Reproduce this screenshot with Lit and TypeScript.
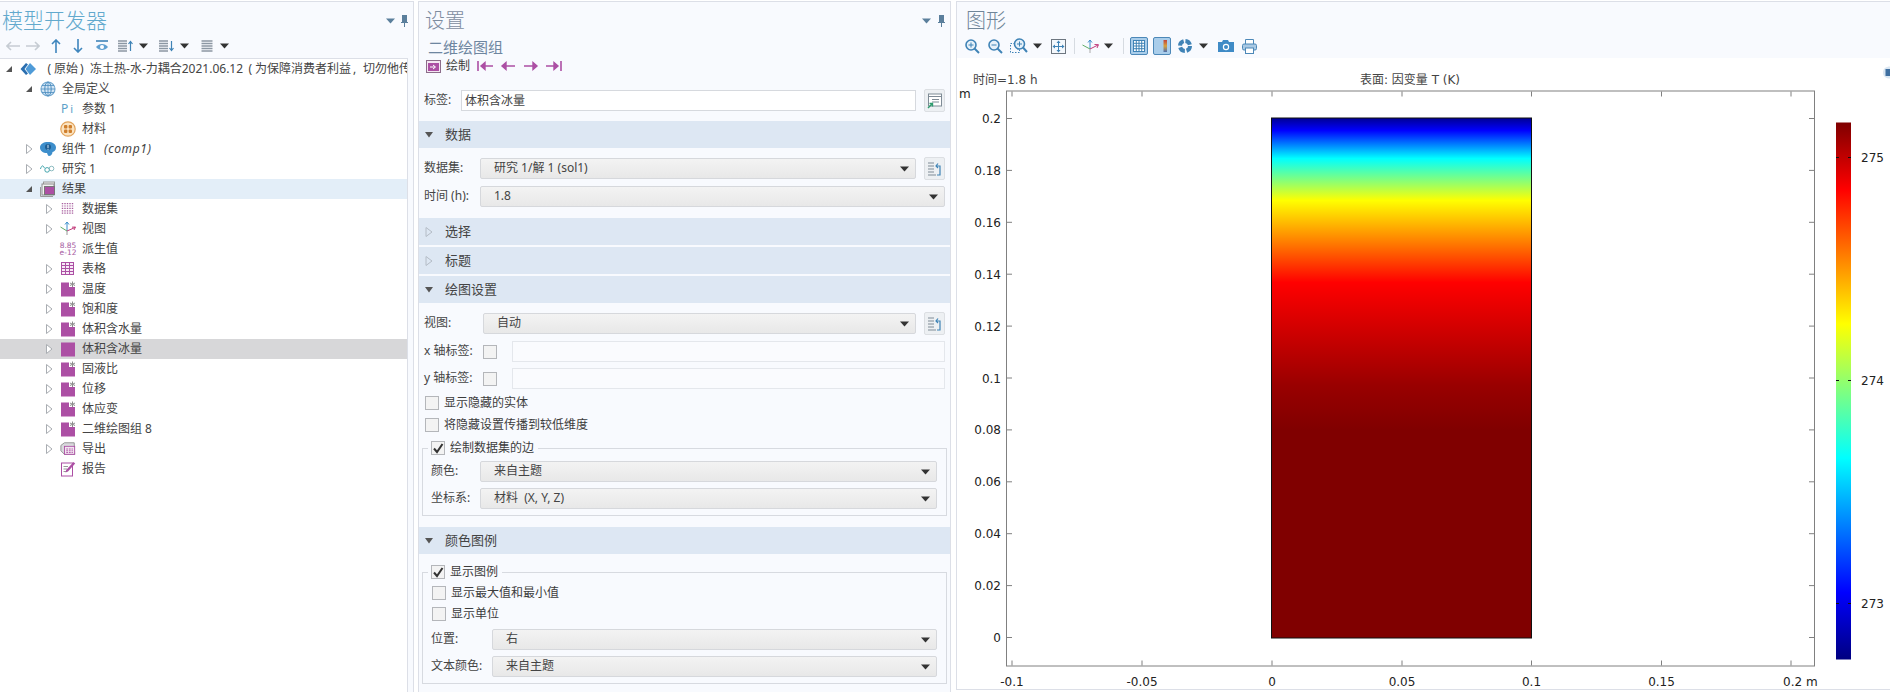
import { LitElement, html, css, svg } from "lit";
import { customElement } from "lit/decorators.js";

const ic = (w: number, h: number, c: unknown) =>
  html`<svg class="ic" width=${w} height=${h} viewBox="0 0 ${w} ${h}">${c}</svg>`;

const PURPLE = "#ac4fa4";
const plotIcon = (star: boolean) =>
  ic(16, 16, star
    ? svg`<path d="M1 1.5H9V6H15V15.5H1Z" fill=${PURPLE}/><path d="M12.5 .5V6M10 2L15 4.5M15 2L10 4.5" stroke="#8c8c8c" stroke-width="1"/>`
    : svg`<rect x="1" y="1.5" width="14" height="14" fill=${PURPLE}/>`);

const icons: Record<string, unknown> = {
  root: ic(16, 16, svg`<path d="M6 2L0.5 8L6 14L8 12.4L4.5 8L8 3.6Z" fill="#2b6fb0"/><path d="M10 2L16 8L10 14L5.5 8Z" fill="#4f9bd8"/>`),
  globe: ic(16, 16, svg`<circle cx="8" cy="8" r="7" fill="#d4e6f5" stroke="#74a9d0" stroke-width="1.2"/><ellipse cx="8" cy="8" rx="3.2" ry="7" fill="none" stroke="#4b8dbf"/><path d="M8 1V15M1 8H15M2 4.5H14M2 11.5H14" stroke="#4b8dbf" stroke-width=".8"/>`),
  mat: ic(16, 16, svg`<circle cx="8" cy="8" r="7.2" fill="#fbe3c0" stroke="#e2a35b" stroke-width="1.2"/><g fill="#cf7f2c"><rect x="4" y="4" width="3.4" height="3.4" rx="1"/><rect x="8.6" y="4" width="3.4" height="3.4" rx="1"/><rect x="4" y="8.6" width="3.4" height="3.4" rx="1"/><rect x="8.6" y="8.6" width="3.4" height="3.4" rx="1"/></g>`),
  comp: ic(16, 16, svg`<path d="M0 6.5C0 3 3.5 1 8 1C12.5 1 16 3 16 6.5C16 9 14.5 10.5 12.5 11C12.5 13 11 15 9 15C8 15 7.5 13 7 12C3 12 0 10 0 6.5Z" fill="#3d8ecb"/><circle cx="8" cy="6" r="3" fill="#1f5d92"/><path d="M8 3.8V7.2M8 8V8.8" stroke="#cfe6f7"/>`),
  study: ic(18, 16, svg`<path d="M.5 8C2 3.5 3.5 3.5 5 7" fill="none" stroke="#2c9aa3"/><circle cx="8" cy="9" r="2.6" fill="none" stroke="#2c9aa3"/><circle cx="13" cy="7.5" r="2.6" fill="none" stroke="#7db2b8"/>`),
  res: ic(16, 16, svg`<rect x="3.5" y="1" width="11" height="11" fill="#eee" stroke="#999"/><rect x="2" y="3" width="12" height="11" fill="#f2f2f2" stroke="#8c8c8c"/><rect x="4.5" y="5.5" width="10" height="8" fill=${PURPLE} stroke="#777"/><path d="M0.5 6V15.5H13" fill="none" stroke="#999"/>`),
  data: ic(16, 16, svg`<path d="M2.5 2V14M5 2V14M7.5 2V14M10 2V14M12.5 2V14" stroke="#a85f9f" stroke-width="1.4" stroke-dasharray="1.2 1.2"/>`),
  view: ic(16, 16, svg`<path d="M7 1.5V10" stroke="#3a8ecb"/><path d="M7 10L.5 6" stroke="#62ad68"/><path d="M7 10L15 6.5" stroke="#c23a7a"/><path d="M5 3.5L7 1L9 3.5" fill="none" stroke="#3a8ecb"/><path d="M12 6.2L15.5 6L14 9" fill="none" stroke="#c23a7a"/><path d="M7 10V14" stroke="#999"/>`),
  table: ic(16, 16, svg`<rect x="1.5" y="1.5" width="12" height="12" fill="#f7eaf6" stroke=${PURPLE}/><path d="M1.5 4.5H13.5M1.5 7.5H13.5M1.5 10.5H13.5M5.5 1.5V13.5M9.5 1.5V13.5" stroke=${PURPLE}/>`),
  plot: plotIcon(true),
  plotSel: plotIcon(false),
  exp: ic(18, 16, svg`<path d="M1 4L5 1H16L16.5 14H5L1 10Z" fill="#d9d9dd" stroke="#8c8c8c"/><rect x="5" y="5" width="11.5" height="9" fill="#f2e5f0" stroke=${PURPLE}/><path d="M7 8H14.5M7 10H14.5M7 12H14.5" stroke=${PURPLE} stroke-dasharray="2 1"/>`),
  rep: ic(16, 16, svg`<rect x="1.5" y="2" width="11" height="13" fill="#fff" stroke=${PURPLE}/><path d="M3.5 5.5H8M3.5 8H7M3.5 10.5H6" stroke="#999"/><path d="M13.5 1L15.2 2.6L8 10.5L5.5 11.5L6.2 9Z" fill=${PURPLE}/>`),
};

const ar = (d: string, c: string) => ic(14, 14, svg`<path d=${d} fill="none" stroke=${c} stroke-width="1.6"/>`);
const caret = ic(9, 6, svg`<path d="M0 .5H9L4.5 5.5Z" fill="#333"/>`);
const listIc = (tail: unknown) =>
  ic(17, 14, svg`<path d="M1 2H10M1 4.5H10M1 7H10M1 9.5H10M1 12H10" stroke="#8c97a3" stroke-width="1.3"/>${tail}`);

const B = "#3f83b6";
const tool1: [number, number, unknown][] = [
  [6, 14, ar("M14 7H1M5 3L1 7L5 11", "#c6ccd3")],
  [26, 14, ar("M0 7H13M9 3L13 7L9 11", "#c6ccd3")],
  [49, 14, ar("M7 14V1M3 5L7 1L11 5", "#3f86bd")],
  [71, 14, ar("M7 0V13M3 9L7 13L11 9", "#3f86bd")],
  [95, 14, ic(14, 14, svg`<path d="M1 2H13" stroke=${B} stroke-width="1.6"/><path d="M1 8C4 4 10 4 13 8C10 12 4 12 1 8Z" fill="#5f9fd0"/><circle cx="7" cy="8" r="2" fill="#fff"/>`)],
  [117, 17, listIc(svg`<path d="M13.5 12V3M11.5 5L13.5 2.5L15.5 5" fill="none" stroke=${B} stroke-width="1.2"/>`)],
  [139, 9, caret],
  [158, 17, listIc(svg`<path d="M13.5 2V11M11.5 9L13.5 11.5L15.5 9" fill="none" stroke=${B} stroke-width="1.2"/>`)],
  [180, 9, caret],
  [201, 12, ic(12, 14, svg`<path d="M.5 2H11.5M.5 4.5H11.5M.5 7H11.5M.5 9.5H11.5M.5 12H11.5" stroke="#8c97a3" stroke-width="1.3"/>`)],
  [220, 9, caret],
];
const lens = (inner: unknown) => ic(15, 15, svg`<circle cx="6" cy="6" r="5" fill="#e6f1f9" stroke=${B} stroke-width="1.6"/><path d="M9.5 9.5L14 14" stroke=${B} stroke-width="2"/>${inner}`);
const tool3: [number, number, unknown][] = [
  [965, 15, lens(svg`<path d="M3.5 6H8.5M6 3.5V8.5" stroke=${B}/>`)],
  [988, 15, lens(svg`<path d="M3.5 6H8.5" stroke=${B}/>`)],
  [1010, 18, ic(18, 16, svg`<rect x=".5" y="5.5" width="9" height="9" fill="none" stroke=${B} stroke-dasharray="1.5 1.5"/><circle cx="9.5" cy="6" r="5" fill="#e6f1f9" stroke=${B} stroke-width="1.6"/><path d="M13 9.5L17 14" stroke=${B} stroke-width="2"/><path d="M7 6H12M9.5 3.5V8.5" stroke=${B}/>`)],
  [1033, 9, caret],
  [1051, 15, ic(15, 15, svg`<rect x=".5" y=".5" width="14" height="14" fill="#f4f8fc" stroke="#6d7680"/><path d="M7.5 3.5V11.5M3.5 7.5H11.5" stroke="#3f83b6"/><path d="M5.5 4L7.5 1.5L9.5 4ZM5.5 11L7.5 13.5L9.5 11ZM4 5.5L1.5 7.5L4 9.5ZM11 5.5L13.5 7.5L11 9.5Z" fill="#3f83b6"/>`)],
  [1074, 1, ic(1, 16, svg`<rect width="1" height="16" fill="#d6dbe1"/>`)],
  [1082, 17, ic(17, 15, svg`<path d="M8 1V10" stroke="#3a8ecb"/><path d="M6 3.5L8 1L10 3.5" fill="none" stroke="#3a8ecb"/><path d="M8 10L.5 6" stroke="#62ad68"/><path d="M8 10L16 6" stroke="#c23a7a"/><path d="M12.5 5.5L16.5 5.7L15 9" fill="none" stroke="#c23a7a"/><path d="M8 10V14" stroke="#aaa"/>`)],
  [1104, 9, caret],
  [1123, 1, ic(1, 16, svg`<rect width="1" height="16" fill="#d6dbe1"/>`)],
  [1130, 18, ic(18, 18, svg`<rect x=".5" y=".5" width="17" height="17" rx="1.5" fill="#a9cdea" stroke="#4c88b8"/><rect x="3.5" y="3.5" width="11" height="11" fill="#fff" stroke="#3f83b6"/><path d="M3.5 6.3H14.5M3.5 9H14.5M3.5 11.7H14.5M6.3 3.5V14.5M9 3.5V14.5M11.7 3.5V14.5" stroke="#3f83b6"/>`)],
  [1153, 18, ic(18, 18, svg`<defs><linearGradient id="lg" x1="0" y1="0" x2="0" y2="1"><stop offset="0" stop-color="#c0453a"/><stop offset=".5" stop-color="#d9a23a"/><stop offset="1" stop-color="#4a6fb0"/></linearGradient></defs><rect x=".5" y=".5" width="17" height="17" rx="1.5" fill="#a9cdea" stroke="#4c88b8"/><rect x="10.5" y="3" width="3.5" height="12" fill="url(#lg)"/>`)],
  [1178, 14, ic(14, 14, svg`<circle cx="7" cy="7" r="5" fill="none" stroke="#3f83b6" stroke-width="4" stroke-dasharray="6 1.8"/>`)],
  [1199, 9, caret],
  [1218, 16, ic(16, 14, svg`<path d="M0 3H4L5 1H10L11 3H16V13H0Z" fill="#3f8bc6"/><circle cx="8" cy="8" r="3.2" fill="#fff"/><circle cx="8" cy="8" r="2" fill="#3f8bc6"/>`)],
  [1242, 15, ic(15, 15, svg`<path d="M3.5 5V.5H11.5V5" fill="#fff" stroke="#4c88b8"/><rect x=".5" y="5" width="14" height="6" rx="1.5" fill="#a9c9e4" stroke="#4c88b8"/><rect x="3.5" y="9" width="8" height="5.5" fill="#fff" stroke="#4c88b8"/>`)],
];
const tool2: [number, number, unknown][] = [
  [477, 16, ic(16, 12, svg`<path d="M1 1V11" stroke=${PURPLE} stroke-width="1.6"/><path d="M16 6H4M8 2.5L4 6L8 9.5Z" fill=${PURPLE} stroke=${PURPLE} stroke-width="1.4"/>`)],
  [500, 15, ic(15, 12, svg`<path d="M15 6H2M6 2.5L2 6L6 9.5Z" fill=${PURPLE} stroke=${PURPLE} stroke-width="1.4"/>`)],
  [524, 15, ic(15, 12, svg`<path d="M0 6H13M9 2.5L13 6L9 9.5Z" fill=${PURPLE} stroke=${PURPLE} stroke-width="1.4"/>`)],
  [546, 16, ic(16, 12, svg`<path d="M15 1V11" stroke=${PURPLE} stroke-width="1.6"/><path d="M0 6H12M8 2.5L12 6L8 9.5Z" fill=${PURPLE} stroke=${PURPLE} stroke-width="1.4"/>`)],
];
const tools = (items: [number, number, unknown][], origin: number) => {
  let cur = origin;
  return items.map(([x, w, c]) => {
    const m = x - cur;
    cur = x + w;
    return html`<span class="tool" style="margin-left:${m}px;width:${w}px">${c}</span>`;
  });
};

type Row = { l: number; a?: "o" | "c"; i?: string; t: unknown; cls?: string };
const plots = ["温度", "饱和度", "体积含水量"];
const rows: Row[] = [
  { l: 0, a: "o", i: "root", t: html`<span class="po">(</span>原始<span class="pc">)</span>冻土热-水-力耦合2021.06.12<span class="po">(</span>为保障消费者利益<span class="pc">,</span>切勿他传<span class="pc">)</span>` },
  { l: 1, a: "o", i: "globe", t: "全局定义" },
  { l: 2, i: "pi", t: "参数 1" },
  { l: 2, i: "mat", t: "材料" },
  { l: 1, a: "c", i: "comp", t: html`组件 1 <em class="tag">(comp1)</em>` },
  { l: 1, a: "c", i: "study", t: "研究 1" },
  { l: 1, a: "o", i: "res", t: "结果", cls: "active" },
  { l: 2, a: "c", i: "data", t: "数据集" },
  { l: 2, a: "c", i: "view", t: "视图" },
  { l: 2, i: "derived", t: "派生值" },
  { l: 2, a: "c", i: "table", t: "表格" },
  ...plots.map((t) => ({ l: 2, a: "c" as const, i: "plot", t })),
  { l: 2, a: "c", i: "plotSel", t: "体积含冰量", cls: "sel" },
  ...["固液比", "位移", "体应变", "二维绘图组 8"].map((t) => ({ l: 2, a: "c" as const, i: "plot", t })),
  { l: 2, a: "c", i: "exp", t: "导出" },
  { l: 2, i: "rep", t: "报告" },
];

const triOpen = ic(12, 12, svg`<path d="M9 3V9H3Z" fill="#555"/>`);
const triClosed = ic(12, 12, svg`<path d="M3.5 1.5L9 6L3.5 10.5Z" fill="#fff" stroke="#a9adb2"/>`);
const headOpen = ic(10, 8, svg`<path d="M1 1H9L5 6.5Z" fill="#555"/>`);
const headClosed = ic(10, 12, svg`<path d="M2 1.5L8 6L2 10.5Z" fill="none" stroke="#b4bcc6"/>`);
const copyIc = ic(15, 16, svg`<path d="M1 2H7M1 5H7M1 8H7M1 11H7M1 14H9" stroke="#7f8b96"/><path d="M9 5H13V14H10M11 2.5L9 5L11 7" fill="none" stroke="#3f83b6" stroke-width="1.2"/>`);
const tagIc = ic(15, 16, svg`<rect x="1.5" y="1" width="13" height="12" fill="#fff" stroke="#7f8b96"/><path d="M1.5 3.5H14.5M5 6.5H12M5 9H12" stroke="#7f8b96"/><path d="M1 15L5 11M2.5 10.5H5.5V13.5" fill="none" stroke="#2f9c6e" stroke-width="1.4"/>`);

const xTicks: [number, string][] = [[1012, "-0.1"], [1142, "-0.05"], [1272, "0"], [1402, "0.05"], [1531.5, "0.1"], [1661.5, "0.15"], [1791, "0.2"]];
const yVals = ["0.2", "0.18", "0.16", "0.14", "0.12", "0.1", "0.08", "0.06", "0.04", "0.02", "0"];
const Y0 = 118, YS = 51.9;

const rectStops: [number, string][] = [[117, "#000090"], [130, "#0000ff"], [158, "#00ffff"], [200, "#ffff00"], [282, "#ff0000"], [385, "#990000"], [430, "#800000"], [637, "#800000"]];

@customElement("app-root")
export class AppRoot extends LitElement {
  static styles = css`
    :host {
      display: flex;
      width: 1890px;
      height: 692px;
      overflow: hidden;
      background: #fff;
      font: 12px/1.2 "Noto Sans", "Noto Sans CJK SC", sans-serif;
      color: #3c3c3c;
    }
    svg { display: block; }
    .panel {
      box-sizing: border-box;
      height: 692px;
      margin-top: 1px;
      border: 1px solid #dcdfe7;
      border-bottom: 0;
      background: #f8fafe;
      display: flex;
      flex-direction: column;
      flex: none;
    }
    .p1 { width: 414px; border-left: 0; }
    .p2 { width: 533px; margin-left: 4px; }
    .p3 { width: 934px; margin-left: 5px; border-right: 0; height: 689px; border-bottom: 1px solid #dcdfe7; }
    .title {
      box-sizing: border-box;
      height: 30px;
      padding-top: 2px;
      margin-top: 3px;
      display: flex;
      align-items: center;
      font-size: 21px;
      font-weight: 300;
      color: #6f8598;
      flex: none;
    }
    .p1 .title { color: #62a9cd; padding-left: 2px; }
    .p2 .title { padding-left: 6px; font-size: 20px; color: #7d8c9e; }
    .p3 .title { padding-left: 9px; font-size: 20px; }
    .pins { margin-left: auto; display: flex; align-items: center; gap: 6px; padding-right: 5px; }
    .p2 .pins { padding-right: 5px; gap: 7px; }
    .bar { display: flex; align-items: center; height: 22px; flex: none; }
    .tool { display: flex; align-items: center; justify-content: center; flex: none; }
    .tree {
      flex: 1;
      margin-top: 1px;
      width: 407px;
      background: #fff;
      border-top: 1px solid #dcdfe7;
      border-right: 1px solid #dcdfe7;
      overflow: hidden;
    }
    .row { display: flex; align-items: center; height: 20px; white-space: nowrap; color: #444; }
    .row.active { background: #e3eef8; }
    .row.sel { background: #d7d7d9; }
    .arrow { width: 12px; margin-left: 3px; flex: none; }
    .node { width: 16px; margin-left: 5px; margin-right: 6px; flex: none; display: flex; justify-content: center; }
    .po, .pc { display: inline-block; width: 12px; }
    .po { text-align: right; padding-right: 3px; box-sizing: border-box; }
    .pc { text-align: left; padding-left: 2px; box-sizing: border-box; }
    .pi { color: #5d9fc9; font-size: 12px; letter-spacing: 2px; }
    .pi small { font-size: 11px; }
    .derived { color: #a65a9f; font: 7.5px/7.5px "DejaVu Sans", sans-serif; text-align: center; }
    .tag { font-size: 12px; margin-left: 5px; letter-spacing: .6px; }
    .sub { height: 20px; margin-top: 2px; padding-left: 9px; font-size: 15px; color: #6e86a0; display: flex; align-items: center; flex: none; }
    .act { height: 18px; display: flex; align-items: center; flex: none; }
    .act .plotbtn { margin-left: 7px; }
    .act .txt { margin-left: 5px; }
    .frow { display: flex; align-items: center; height: 21px; margin: 0 5px; flex: none; }
    .frow.first { margin-top: 10px; }
    .frow.next { margin-top: 7px; }
    .frow.label-row { margin-top: 15px; }
    .frow.next + .frow.next { margin-top: 6px; }
    .lab { flex: none; color: #444; white-space: nowrap; }
    .w37 { width: 37px; }
    .w56 { width: 56px; }
    .w59 { width: 59px; }
    .w49 { width: 49px; }
    .w61 { width: 61px; }
    .input {
      flex: 1; height: 21px; box-sizing: border-box; background: #fff;
      border: 1px solid #d6d9de; padding: 0 3px; line-height: 19px; color: #444;
    }
    .input.empty { background: #fafbfe; border-color: #e4e7ec; margin-left: 15px; }
    .sel-box {
      flex: 1; height: 21px; box-sizing: border-box; display: flex; align-items: center;
      border: 1px solid #d6d8dc; border-radius: 2px;
      background: linear-gradient(#f3f3f3, #e8e8e8);
      padding: 0 6px 0 13px; color: #444; white-space: pre;
    }
    .sel-box .c { margin-left: auto; }
    .ibtn {
      width: 21px; height: 23px; box-sizing: border-box; margin-left: 8px; flex: none;
      border: 1px solid #dcdfe3; background: #edf0f3; border-radius: 2px;
      display: flex; align-items: center; justify-content: center;
    }
    .head {
      height: 27px; background: #dde7f3; display: flex; align-items: center; flex: none; color: #444; font-size: 13px;
    }
    .head .t { width: 26px; padding-left: 5px; box-sizing: border-box; display: flex; }
    .mt10 { margin-top: 10px; }
    .mt11 { margin-top: 11px; }
    .mt2 { margin-top: 2px; }
    .cb {
      width: 14px; height: 14px; box-sizing: border-box; flex: none;
      border: 1px solid #b4b6ba; background: #f3f3f3;
      display: flex; align-items: center; justify-content: center;
    }
    .chk { display: flex; align-items: center; height: 20px; gap: 5px; margin-left: 6px; flex: none; white-space: nowrap; }
    .chk.a { margin-top: 4px; }
    .chk.b { margin-top: 2px; }
    .group { border: 1px solid #d7dae0; margin: 0 3px; flex: none; box-sizing: border-box; }
    .g1 { margin-top: 13px; height: 68px; }
    .g2 { margin-top: 18px; height: 112px; }
    .legend {
      display: flex; align-items: center; gap: 5px; height: 14px; width: fit-content; background: #f8fafe;
      margin: -8px 0 0 5px; padding: 0 4px 0 3px; white-space: nowrap;
    }
    .gbody { display: flex; flex-direction: column; }
    .g1 .gbody { margin-top: 6px; }
    .g2 .gbody { margin-top: 4px; }
    .grow { display: flex; align-items: center; height: 21px; margin: 0 9px 0 8px; }
    .grow.next { margin-top: 6px; }
    .gchk { display: flex; align-items: center; height: 20px; gap: 5px; margin-left: 9px; }
    .gchk.gap { margin-top: 1px; }
    .gchk.gap + .grow { margin-top: 5px; }
    .plot { flex: 1; background: #fff; margin-top: 1px; min-height: 0; }
    .plot text { font: 12px "DejaVu Sans", "Noto Sans CJK SC", sans-serif; fill: #222; }
    .plot .cap { fill: #444; }
  `;

  private pins() {
    return html`<div class="pins">
      ${ic(9, 6, svg`<path d="M0 .5H9L4.5 5.5Z" fill="#5b7f9c"/>`)}
      ${ic(7, 12, svg`<path d="M1 0H6V7H7V8H4V12H3V8H0V7H1Z" fill="#5b7f9c"/>`)}
    </div>`;
  }
  private node(k?: string) {
    if (k === "pi") return html`<span class="pi">P<small>i</small></span>`;
    if (k === "derived") return html`<span class="derived">8.85<br />e-12</span>`;
    return k ? icons[k] : null;
  }
  private select(text: string) {
    return html`<div class="sel-box">${text}<span class="c">${caret}</span></div>`;
  }
  private renderTree() {
    return rows.map(
      (r) => html`<div class="row ${r.cls ?? ""}" style="padding-left:${r.l * 20}px">
        <span class="arrow">${r.a === "o" ? triOpen : r.a === "c" ? triClosed : null}</span>
        <span class="node">${this.node(r.i)}</span>
        <span>${r.t}</span>
      </div>`
    );
  }
  private head(text: string, open: boolean, cls: string) {
    return html`<div class="head ${cls}"><span class="t">${open ? headOpen : headClosed}</span>${text}</div>`;
  }
  private cb(on = false) {
    return html`<span class="cb">${on
      ? ic(12, 12, svg`<path d="M2 6.5L5 10L10.5 2" fill="none" stroke="#333" stroke-width="2"/>`)
      : null}</span>`;
  }
  private renderPlot() {
    return html`<svg class="plot" width="933" height="630" viewBox="957 58 933 630">
      <defs>
        <linearGradient id="rg" gradientUnits="userSpaceOnUse" x1="0" y1="117" x2="0" y2="637">
          ${rectStops.map(([y, c]) => svg`<stop offset=${(y - 117) / 520} stop-color=${c} />`)}
        </linearGradient>
        <linearGradient id="cg" x1="0" y1="0" x2="0" y2="1">
          <stop offset="0" stop-color="#7f0000" />
          <stop offset=".125" stop-color="#ff0000" />
          <stop offset=".375" stop-color="#ffff00" />
          <stop offset=".625" stop-color="#00ffff" />
          <stop offset=".875" stop-color="#0000ff" />
          <stop offset="1" stop-color="#000080" />
        </linearGradient>
      </defs>
      <text class="cap" x="973" y="83">时间=1.8 h</text>
      <text class="cap" x="1360" y="83">表面: 因变量 T (K)</text>
      <text x="959" y="97">m</text>
      <rect x="1006.5" y="90.5" width="808" height="575" fill="none" stroke="#808080" />
      ${xTicks.map(([x, t]) => svg`
        <path d="M${x} 91V96M${x} 665V660" stroke="#808080" />
        ${t === "0.2"
          ? svg`<text x=${x - 8} y="685">0.2 m</text>`
          : svg`<text x=${x} y="685" text-anchor="middle">${t}</text>`}
      `)}
      ${yVals.map((t, i) => {
        const y = Y0 + i * YS;
        return svg`
          <path d="M1007 ${y}H1012M1814 ${y}H1809" stroke="#808080" />
          <text x="1001" y=${y + 4.5} text-anchor="end">${t}</text>`;
      })}
      <rect x="1271.5" y="117.5" width="260" height="520" fill="url(#rg)" stroke="#111" />
      <rect x="1836" y="122" width="15" height="537" fill="url(#cg)" />
      ${[[157, "275"], [380, "274"], [603, "273"]].map(([y, t]) => svg`
        <path d="M1836 ${y}H1839M1848 ${y}H1851" stroke="#111" />
        <text x="1861" y=${(y as number) + 4.5}>${t}</text>`)}
      <path d="M1883 72C1883 68 1886 66 1890 66V78C1886 78 1883 76 1883 72Z" fill="#dbe7f2" />
      <rect x="1885.5" y="68.5" width="5" height="7" fill="#3f6fa0" />
    </svg>`;
  }
  render() {
    return html`
      <section class="panel p1">
        <div class="title">模型开发器${this.pins()}</div>
        <div class="bar">${tools(tool1, 0)}</div>
        <div class="tree">${this.renderTree()}</div>
      </section>
      <section class="panel p2">
        <div class="title">设置${this.pins()}</div>
        <div class="sub">二维绘图组</div>
        <div class="act">
          <span class="plotbtn">${ic(15, 13, svg`<rect x=".5" y=".5" width="14" height="12" fill="#f4e6f2" stroke="#8c6d8a"/><rect x="2" y="3" width="11" height="8" fill=${PURPLE}/><path d="M4 7H9M7 5L9.5 7L7 9" fill="none" stroke="#fff"/>`)}</span>
          <span class="txt">绘制</span>
          ${tools(tool2, 419 + 7 + 15 + 5 + 24)}
        </div>
        <div class="frow label-row">
          <span class="lab w37">标签:</span>
          <div class="input">体积含冰量</div>
          <span class="ibtn">${tagIc}</span>
        </div>
        ${this.head("数据", true, "mt10")}
        <div class="frow first"><span class="lab w56">数据集:</span>${this.select("研究 1/解 1 (sol1)")}<span class="ibtn">${copyIc}</span></div>
        <div class="frow next"><span class="lab w56">时间 (h):</span>${this.select("1.8")}</div>
        ${this.head("选择", false, "mt11")}
        ${this.head("标题", false, "mt2")}
        ${this.head("绘图设置", true, "mt2")}
        <div class="frow first"><span class="lab w59">视图:</span>${this.select("自动")}<span class="ibtn">${copyIc}</span></div>
        <div class="frow next"><span class="lab w59">x 轴标签:</span>${this.cb()}<div class="input empty"></div></div>
        <div class="frow next"><span class="lab w59">y 轴标签:</span>${this.cb()}<div class="input empty"></div></div>
        <div class="chk a">${this.cb()}显示隐藏的实体</div>
        <div class="chk b">${this.cb()}将隐藏设置传播到较低维度</div>
        <div class="group g1">
          <div class="legend">${this.cb(true)}绘制数据集的边</div>
          <div class="gbody">
            <div class="grow"><span class="lab w49">颜色:</span>${this.select("来自主题")}</div>
            <div class="grow next"><span class="lab w49">坐标系:</span>${this.select("材料  (X, Y, Z)")}</div>
          </div>
        </div>
        ${this.head("颜色图例", true, "mt11")}
        <div class="group g2">
          <div class="legend">${this.cb(true)}显示图例</div>
          <div class="gbody">
            <div class="gchk">${this.cb()}显示最大值和最小值</div>
            <div class="gchk gap">${this.cb()}显示单位</div>
            <div class="grow"><span class="lab w61">位置:</span>${this.select("右")}</div>
            <div class="grow next"><span class="lab w61">文本颜色:</span>${this.select("来自主题")}</div>
          </div>
        </div>
      </section>
      <section class="panel p3">
        <div class="title">图形</div>
        <div class="bar">${tools(tool3, 957)}</div>
        ${this.renderPlot()}
      </section>
    `;
  }
}
